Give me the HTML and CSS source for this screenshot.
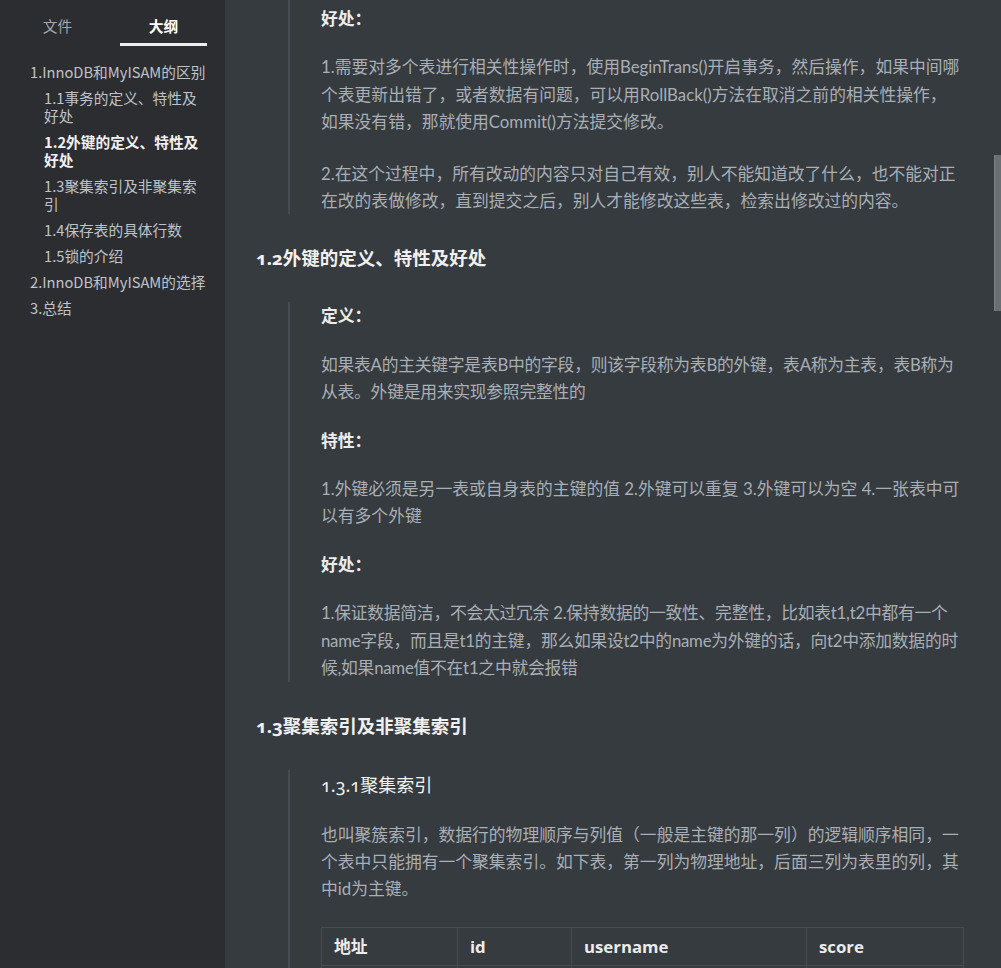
FILE: index.html
```html
<!DOCTYPE html>
<html lang="zh-CN">
<head>
<meta charset="utf-8">
<title>InnoDB和MyISAM的区别</title>
<link rel="stylesheet" href="styles.css">
</head>
<body>
<div class="app">
  <aside class="sidebar">
    <div class="tabs">
      <div class="tab">文件</div>
      <div class="tab active">大纲</div>
    </div>
    <ul class="outline">
      <li class="lv1">1.InnoDB和MyISAM的区别</li>
      <li class="lv2">1.1事务的定义、特性及好处</li>
      <li class="lv2 current">1.2外键的定义、特性及好处</li>
      <li class="lv2">1.3聚集索引及非聚集索引</li>
      <li class="lv2">1.4保存表的具体行数</li>
      <li class="lv2">1.5锁的介绍</li>
      <li class="lv1">2.InnoDB和MyISAM的选择</li>
      <li class="lv1">3.总结</li>
    </ul>
  </aside>
  <main class="main">
    <div class="content">
      <blockquote class="quote first">
        <p><strong>好处：</strong></p>
        <p>1.需要对多个表进行相关性操作时，使用BeginTrans()开启事务，然后操作，如果中间哪个表更新出错了，或者数据有问题，可以用RollBack()方法在取消之前的相关性操作，如果没有错，那就使用Commit()方法提交修改。</p>
        <p class="wide-gap">2.在这个过程中，所有改动的内容只对自己有效，别人不能知道改了什么，也不能对正在改的表做修改，直到提交之后，别人才能修改这些表，检索出修改过的内容。</p>
      </blockquote>

      <h2><span class="num">1.2</span>外键的定义、特性及好处</h2>
      <blockquote class="quote">
        <p><strong>定义：</strong></p>
        <p class="tight">如果表A的主关键字是表B中的字段，则该字段称为表B的外键，表A称为主表，表B称为从表。外键是用来实现参照完整性的</p>
        <p><strong>特性：</strong></p>
        <p>1.外键必须是另一表或自身表的主键的值 2.外键可以重复 3.外键可以为空 4.一张表中可以有多个外键</p>
        <p><strong>好处：</strong></p>
        <p class="tight">1.保证数据简洁，不会太过冗余 2.保持数据的一致性、完整性，比如表t1,t2中都有一个name字段，而且是t1的主键，那么如果设t2中的name为外键的话，向t2中添加数据的时候,如果name值不在t1之中就会报错</p>
      </blockquote>

      <h2><span class="num">1.3</span>聚集索引及非聚集索引</h2>
      <blockquote class="quote">
        <h3><span class="num">1.3.1</span>聚集索引</h3>
        <p>也叫聚簇索引，数据行的物理顺序与列值（一般是主键的那一列）的逻辑顺序相同，一个表中只能拥有一个聚集索引。如下表，第一列为物理地址，后面三列为表里的列，其中id为主键。</p>
        <table class="grid">
          <thead>
            <tr><th class="c1">地址</th><th class="c2">id</th><th class="c3">username</th><th class="c4">score</th></tr>
          </thead>
          <tbody>
            <tr><td>&nbsp;</td><td>&nbsp;</td><td>&nbsp;</td><td>&nbsp;</td></tr>
          </tbody>
        </table>
      </blockquote>
    </div>
    <div class="scroll-thumb"></div>
  </main>
</div>
</body>
</html>
```

FILE: styles.css
```css
html, body {
  margin: 0;
  padding: 0;
  height: 100%;
  overflow: hidden;
  background: #363b40;
}

body {
  font-family: "Lato", "Noto Sans CJK SC", sans-serif;
  color: #a9afb5;
}

.app {
  display: flex;
  height: 968px;
}

/* ---------- sidebar ---------- */
.sidebar {
  width: 225px;
  flex: 0 0 225px;
  background: #2c2d31;
  box-sizing: border-box;
  padding-right: 14px;
  font-family: "Noto Sans CJK SC", sans-serif;
}

.tabs {
  display: flex;
  gap: 19px;
  padding: 9px 0 0 14px;
}

.tab {
  width: 87px;
  text-align: center;
  font-size: 14.7px;
  line-height: 34px;
  color: #a3a7ac;
  border-bottom: 3px solid transparent;
}

.tab.active {
  color: #ffffff;
  font-weight: bold;
  border-bottom-color: #eceef2;
}

.outline {
  list-style: none;
  margin: 13px 0 0;
  padding: 0;
}

.outline li {
  font-size: 14.7px;
  line-height: 18px;
  padding: 4px 0;
  color: #bfc3c8;
}

.outline .lv1 { padding-left: 30px; }
.outline .lv2 { padding-left: 44px; }

.outline .current {
  color: #f0f0f0;
  font-weight: bold;
}

/* ---------- main ---------- */
.main {
  flex: 1;
  position: relative;
  overflow: hidden;
}

.content {
  padding: 0 38px 0 31px;
}

.quote {
  margin: 0 0 0 32px;
  padding: 0 0 0 31px;
  border-left: 2px solid #474c53;
}

.quote.first {
  padding-top: 5px;
}

p {
  margin: 21px 0;
  font-size: 16.8px;
  line-height: 27.4px;
}

p.tight { letter-spacing: -0.25px; }

.quote > :first-child { margin-top: 0; }
.quote > :last-child { margin-bottom: 0; }

p.wide-gap { margin-top: 24px; }

strong {
  color: #ececec;
  font-weight: bold;
}

h2 {
  margin: 31px 0;
  font-size: 18.5px;
  line-height: 26px;
  font-weight: bold;
  color: #f0f0f0;
}

h3 {
  margin: 0 0 19px;
  font-size: 18px;
  line-height: 30px;
  font-weight: normal;
  color: #f2f2f2;
}

.num {
  font-family: "Noto Sans", "Open Sans", sans-serif;
  font-variant-numeric: oldstyle-nums;
  font-feature-settings: "onum" 1;
  line-height: 1;
}

/* ---------- table ---------- */
.grid {
  border-collapse: collapse;
  table-layout: fixed;
  width: 642px;
  margin-top: 24px;
  font-size: 16.8px;
  font-family: "Open Sans", "Noto Sans CJK SC", sans-serif;
}

.grid th, .grid td {
  box-sizing: border-box;
  border: 1px solid #474c53;
  padding: 6px 12px;
  line-height: 25px;
  text-align: left;
}

.grid th {
  color: #ececec;
  font-weight: bold;
}

.grid .c1 { width: 136px; }
.grid .c2 { width: 114px; }
.grid .c3 { width: 235px; }
.grid .c4 { width: 157px; }

/* ---------- scrollbar overlay ---------- */
.scroll-thumb {
  position: absolute;
  right: 0;
  top: 155px;
  width: 6px;
  height: 156px;
  background: #6b6e72;
  border-left: 1px solid #7c7f83;
}
```
